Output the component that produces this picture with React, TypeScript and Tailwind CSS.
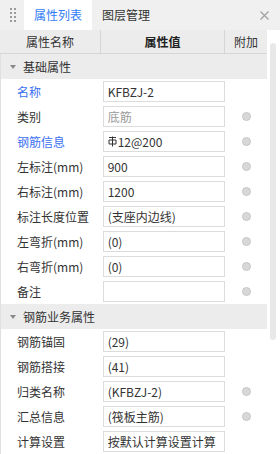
import React from 'react'

type Row = {
  label: string
  value: string
  blue?: boolean
  muted?: boolean
  dot?: boolean
  rebar?: boolean
}

const groups: { title: string; rows: Row[] }[] = [
  {
    title: '基础属性',
    rows: [
      { label: '名称', value: 'KFBZJ-2', blue: true },
      { label: '类别', value: '底筋', muted: true, dot: true },
      { label: '钢筋信息', value: '12@200', blue: true, dot: true, rebar: true },
      { label: '左标注(mm)', value: '900', dot: true },
      { label: '右标注(mm)', value: '1200', dot: true },
      { label: '标注长度位置', value: '(支座内边线)', dot: true },
      { label: '左弯折(mm)', value: '(0)', dot: true },
      { label: '右弯折(mm)', value: '(0)', dot: true },
      { label: '备注', value: '', dot: true },
    ],
  },
  {
    title: '钢筋业务属性',
    rows: [
      { label: '钢筋锚固', value: '(29)' },
      { label: '钢筋搭接', value: '(41)' },
      { label: '归类名称', value: '(KFBZJ-2)', dot: true },
      { label: '汇总信息', value: '(筏板主筋)', dot: true },
      { label: '计算设置', value: '按默认计算设置计算' },
    ],
  },
]

function RebarMark() {
  // 三级钢符号
  return (
    <svg width="9" height="11" viewBox="0 0 9 11" className="mr-[1px] shrink-0">
      <path d="M1 1.5 H8 M4.5 0.5 V10.5" stroke="#333" strokeWidth="1" fill="none" />
      <path d="M1 4 H8 V8 H1 Z" stroke="#333" strokeWidth="1" fill="none" />
    </svg>
  )
}

function Handle() {
  return (
    <div className="grid grid-cols-2 gap-[2px] w-[6px]">
      {Array.from({ length: 8 }, (_, i) => (
        <span key={i} className="w-[2px] h-[2px] bg-[#9a9a9a]" />
      ))}
    </div>
  )
}

function DataRow({ row }: { row: Row }) {
  return (
    <div className="flex h-[25px] items-center">
      <div
        className={`w-[101px] pl-[16px] text-[12px] ${row.blue ? 'text-[#3a6ff2]' : 'text-[#333]'}`}
      >
        {row.label}
      </div>
      <div className="w-[124px] pl-[1px]">
        <div
          className={`h-[21px] w-[122px] border border-[#dcdcdc] px-[4px] flex items-center text-[12px] whitespace-nowrap overflow-hidden ${row.muted ? 'text-[#9a9a9a]' : 'text-[#333]'}`}
        >
          {row.rebar && <RebarMark />}
          {row.value}
        </div>
      </div>
      <div className="w-[42px] flex justify-center">
        {row.dot && (
          <span className="w-[9px] h-[9px] rounded-full bg-[#d8d8d8] border border-[#c6c6c6]" />
        )}
      </div>
    </div>
  )
}

export default function App() {
  return (
    <div
      className="w-[280px] h-[454px] bg-white overflow-hidden text-[#333]"
      style={{ fontFamily: '"Noto Sans CJK SC", "Noto Sans", sans-serif' }}
    >
      <div className="h-[30px] bg-[#f0f0f0] flex items-center">
        <div className="w-[24px] flex justify-center pl-[2px]">
          <Handle />
        </div>
        <div className="w-[68px] h-full bg-white flex items-center justify-center text-[12px] text-[#2f7cf6]">
          属性列表
        </div>
        <div className="pl-[10px] text-[12px] text-[#333]">图层管理</div>
        <div className="ml-auto mr-[11px]">
          <svg width="9" height="9" viewBox="0 0 9 9">
            <path d="M0.5 0.5 L8.5 8.5 M8.5 0.5 L0.5 8.5" stroke="#a0a0a0" strokeWidth="1.2" />
          </svg>
        </div>
      </div>

      <div className="flex">
        <div className="w-[267px]">
          <div className="flex h-[24px] bg-[#ececec] border-b border-[#d6d6d6] text-[12px]">
            <div className="w-[101px] border-r border-[#d6d6d6] flex items-center justify-center">
              属性名称
            </div>
            <div className="w-[124px] border-r border-[#d6d6d6] flex items-center justify-center font-bold text-[#222]">
              属性值
            </div>
            <div className="flex-1 flex items-center justify-center">附加</div>
          </div>

          <div className="border-l border-[#e0e0e0]">
            {groups.map((g) => (
              <div key={g.title}>
                <div className="flex h-[25px] items-center bg-[#ececec] text-[12px]">
                  <span className="w-[22px] flex justify-center pl-[2px]">
                    <svg width="6" height="4" viewBox="0 0 6 4">
                      <path d="M0 0 H6 L3 4 Z" fill="#8a8a8a" />
                    </svg>
                  </span>
                  {g.title}
                </div>
                {g.rows.map((r) => (
                  <DataRow key={r.label} row={r} />
                ))}
              </div>
            ))}
          </div>
        </div>

        <div className="w-[13px] pl-[3px] pt-[13px]">
          <div className="w-[6px] h-[297px] rounded-full bg-[#e8e8e8]" />
        </div>
      </div>
    </div>
  )
}
